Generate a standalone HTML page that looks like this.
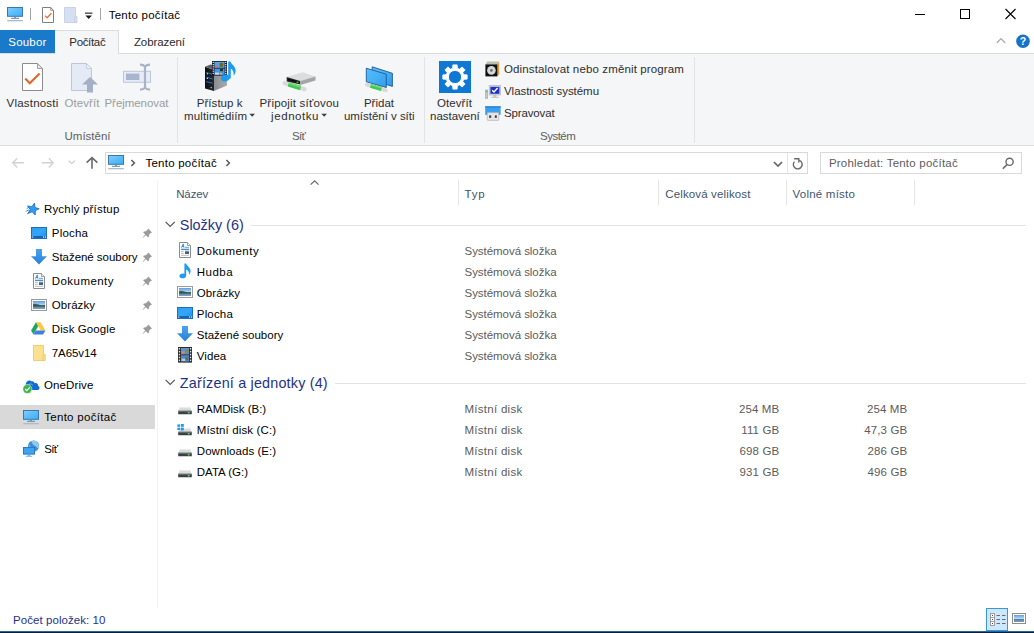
<!DOCTYPE html>
<html lang="cs">
<head>
<meta charset="utf-8">
<title>Tento počítač</title>
<style>
html,body{margin:0;padding:0;}
body{width:1034px;height:633px;position:relative;overflow:hidden;background:#fff;font-family:"Liberation Sans",sans-serif;font-size:12px;}
.t{position:absolute;white-space:pre;line-height:16px;font-size:11.5px;}
.b{position:absolute;}
svg{position:absolute;overflow:visible;}
</style>
</head>
<body>
<!-- ===== frame ===== -->
<div class="b" style="left:0;top:54px;width:1034px;height:91px;background:#f5f6f7;"></div>
<div class="b" style="left:0;top:53px;width:1034px;height:1px;background:#dadbdc;"></div>
<div class="b" style="left:0;top:145px;width:1034px;height:1px;background:#dadbdc;"></div>
<!-- tabs -->
<div class="b" style="left:54px;top:30px;width:65px;height:24px;background:#f5f6f7;border:1px solid #dadbdc;border-bottom:none;box-sizing:border-box;"></div>
<div class="b" style="left:0;top:30px;width:55px;height:23px;background:#1979ca;"></div>
<!-- ribbon separators -->
<div class="b" style="left:177px;top:57px;width:1px;height:86px;background:#e2e3e4;"></div>
<div class="b" style="left:424px;top:57px;width:1px;height:86px;background:#e2e3e4;"></div>
<div class="b" style="left:694px;top:57px;width:1px;height:86px;background:#e2e3e4;"></div>
<!-- address + search boxes -->
<div class="b" style="left:105px;top:152px;width:703px;height:22px;border:1px solid #d9d9d9;box-sizing:border-box;"></div>
<div class="b" style="left:787px;top:153px;width:1px;height:20px;background:#e5e5e5;"></div>
<div class="b" style="left:820px;top:152px;width:202px;height:22px;border:1px solid #d9d9d9;box-sizing:border-box;"></div>
<!-- nav pane -->
<div class="b" style="left:0;top:405px;width:155px;height:24px;background:#d9d9d9;"></div>
<div class="b" style="left:157px;top:180px;width:1px;height:428px;background:#f2f2f2;"></div>
<!-- column dividers -->
<div class="b" style="left:458px;top:180px;width:1px;height:25px;background:#e5e5e5;"></div>
<div class="b" style="left:658px;top:180px;width:1px;height:25px;background:#e5e5e5;"></div>
<div class="b" style="left:786px;top:180px;width:1px;height:25px;background:#e5e5e5;"></div>
<div class="b" style="left:914px;top:180px;width:1px;height:25px;background:#e5e5e5;"></div>
<!-- group lines -->
<div class="b" style="left:251px;top:225px;width:775px;height:1px;background:#e2e2e2;"></div>
<div class="b" style="left:335px;top:383px;width:691px;height:1px;background:#e2e2e2;"></div>
<!-- bottom border -->
<div class="b" style="left:0;top:631px;width:1034px;height:1px;background:#2a6496;"></div><div class="b" style="left:0;top:632px;width:1034px;height:1px;background:#0a2038;"></div>
<!-- view buttons -->
<div class="b" style="left:986px;top:608px;width:22px;height:23px;background:#cce8ff;border:1px solid #3a96dd;box-sizing:border-box;"></div>
<svg width="0" height="0" style="left:0;top:0">
<defs>
<linearGradient id="scr" x1="0" y1="0" x2="1" y2="1"><stop offset="0" stop-color="#86cdfc"/><stop offset="0.5" stop-color="#5bbdfb"/><stop offset="1" stop-color="#3aaefa"/></linearGradient>
<linearGradient id="desk" x1="0" y1="0" x2="1" y2="1"><stop offset="0" stop-color="#2d9ff4"/><stop offset="0.5" stop-color="#35a6f7"/><stop offset="1" stop-color="#1e8eea"/></linearGradient>
<linearGradient id="dl" x1="0" y1="0" x2="0" y2="1"><stop offset="0" stop-color="#4aa3ee"/><stop offset="1" stop-color="#2a7fd6"/></linearGradient>
<linearGradient id="hdd" x1="0" y1="0" x2="0" y2="1"><stop offset="0" stop-color="#c9c9c9"/><stop offset="1" stop-color="#8f9396"/></linearGradient>
<linearGradient id="sky" x1="0" y1="0" x2="0" y2="1"><stop offset="0" stop-color="#5f9be0"/><stop offset="0.5" stop-color="#b9d6ee"/><stop offset="0.6" stop-color="#4f7f96"/><stop offset="1" stop-color="#7fa4c4"/></linearGradient>
<g id="pc">
  <rect x="0.5" y="0.5" width="15" height="8.8" fill="url(#scr)" stroke="#3b77a8" stroke-width="1"/>
  <rect x="7" y="9.8" width="2" height="1.1" fill="#6f93b4"/>
  <rect x="4" y="10.8" width="8" height="1" fill="#6288aa"/>
  <rect x="0.2" y="13" width="15.6" height="1.3" fill="#a9bccf"/>
</g>
<g id="pin"><path d="M6.2 0.6 L10 4.4 L8.9 4.9 L7.2 6.6 L7 8.6 L5.9 9.3 L3.9 7.3 L0.8 10 L0.5 9.7 L3.2 6.6 L1.2 4.6 L1.9 3.5 L3.9 3.3 L5.6 1.6 Z" fill="#999b9e"/></g>
<g id="doc">
  <path d="M0.5 0.5 H8.5 L11.5 3.5 V15.5 H0.5 Z" fill="#fff" stroke="#8b8b8b"/>
  <path d="M8.5 0.5 V3.5 H11.5" fill="#f2f2f2" stroke="#8b8b8b" stroke-width="0.8"/>
  <path d="M2.3 5.7 L4.3 1.9 L4.9 5.7 M3 4.5 H4.8" fill="none" stroke="#2f8ad0" stroke-width="0.9"/>
  <path d="M6 5.3 H10" stroke="#4f9ad0" stroke-width="0.9"/>
  <path d="M2 7.3 H10" stroke="#2a7ab8" stroke-width="1.1"/>
  <path d="M2 9.3 H4.8 M2 11.3 H4.8" stroke="#a4a4a4" stroke-width="0.8"/>
  <rect x="6" y="8.7" width="4" height="1.5" fill="#5f93d6"/><rect x="6" y="10.2" width="4" height="1.6" fill="#2b3a44"/>
  <path d="M2 13.3 H10" stroke="#a8a8a8" stroke-width="0.8"/>
</g>
<g id="deskico">
  <rect x="0.5" y="0.5" width="15" height="11" fill="url(#desk)" stroke="#1b6fc2"/>
  <rect x="1" y="9" width="14" height="2" fill="#1565b8"/>
  <rect x="1.2" y="9.5" width="1.1" height="1.1" fill="#fff"/><rect x="12" y="9.5" width="1.1" height="1.1" fill="#fff"/><rect x="13.9" y="9.5" width="1.1" height="1.1" fill="#fff"/>
</g>
<g id="down"><path d="M5 0 H11 V7.2 H16 L8 15.6 L0 7.2 H5 Z" fill="url(#dl)"/></g>
<g id="pic">
  <rect x="0.5" y="0.5" width="15" height="11" fill="#fff" stroke="#9c9c9c"/>
  <rect x="2" y="2" width="12" height="8" fill="url(#sky)"/>
  <path d="M2 5.4 C4 4 6 5.6 9 6 C11 6.3 12.5 6.2 14 6 V7.6 H2 Z" fill="#2c4f44" opacity="0.9"/>
</g>
<g id="hd">
  <path d="M2 0 H12 L13.8 4 H0.2 Z" fill="#d9dbdc"/>
  <path d="M2.6 0 H11.4 L11.8 1 H2.2 Z" fill="#ececec"/>
  <rect x="0.2" y="3.8" width="13.6" height="3.5" rx="0.4" fill="#3a3f40"/>
  <rect x="0.2" y="3.8" width="13.6" height="0.7" fill="#8e9396"/>
  <rect x="9.8" y="5.2" width="1.8" height="1.1" fill="#7df07a"/>
</g>
</defs></svg>

<!-- title bar quick access -->
<svg style="left:7px;top:7px" width="16" height="16"><use href="#pc"/></svg>
<div class="b" style="left:30px;top:8px;width:1px;height:12px;background:#a6a6a6;"></div>
<svg style="left:42px;top:7px" width="13" height="16">
  <path d="M0.5 0.5 H8.7 L11.5 3.3 V15.5 H0.5 Z" fill="#fff" stroke="#7f7f7f"/>
  <path d="M8.7 0.5 V3.3 H11.5" fill="none" stroke="#7f7f7f" stroke-width="0.8"/>
  <path d="M2.9 8.6 L5.1 10.8 L9.4 6.2" fill="none" stroke="#e96f3a" stroke-width="1.3"/>
</svg>
<svg style="left:64px;top:7px" width="14" height="16">
  <path d="M0.5 0.5 H11.5 V9.5 H13 V15.5 H0.5 Z" fill="#d6e0f1" stroke="#c8d3e8"/>
  <path d="M10.6 9.5 V15.5" stroke="#c0cce2" stroke-width="0.8" fill="none"/>
</svg>
<svg style="left:85px;top:12px" width="8" height="8">
  <rect x="0" y="0.6" width="7.4" height="1.1" fill="#1a1a1a"/>
  <path d="M0.4 3.6 H7 L3.7 7 Z" fill="#1a1a1a"/>
</svg>
<div class="b" style="left:100px;top:8px;width:1px;height:12px;background:#a6a6a6;"></div>

<!-- window controls -->
<svg style="left:914px;top:9px" width="110" height="12">
  <rect x="1" y="5" width="10" height="1" fill="#000"/>
  <rect x="46.5" y="0.5" width="9" height="9" fill="none" stroke="#000" stroke-width="1"/>
  <path d="M91.5 0 L101.5 10 M101.5 0 L91.5 10" stroke="#000" stroke-width="1.1" fill="none"/>
</svg>
<!-- collapse chevron + help -->
<svg style="left:996px;top:34px" width="36" height="15">
  <path d="M0.8 9 L5 4.6 L9.2 9" fill="none" stroke="#a8a8a8" stroke-width="1.2"/>
  <circle cx="27" cy="7.2" r="6.8" fill="#1673c7"/>
  <text x="27" y="11" text-anchor="middle" font-family="Liberation Sans, sans-serif" font-weight="bold" font-size="10.5" fill="#fff">?</text>
</svg>

<!-- ===== ribbon icons ===== -->
<!-- Vlastnosti -->
<svg style="left:22px;top:63px" width="22" height="28">
  <path d="M0.5 0.5 H15.5 L20.5 5.5 V27.5 H0.5 Z" fill="#fff" stroke="#8c8c8c"/>
  <path d="M15.5 0.5 V5.5 H20.5 Z" fill="#e8e8e8" stroke="#8c8c8c" stroke-width="0.8"/>
  <path d="M3.2 15.6 L7.8 20.2 L17.6 10.4" fill="none" stroke="#e0672e" stroke-width="2.1"/>
</svg>
<!-- Otevrit (disabled) -->
<svg style="left:71px;top:63px" width="28" height="30">
  <path d="M0.5 0.5 H15.5 L20.5 5.5 V27.5 H0.5 Z" fill="#e4ebf7" stroke="#bcc7da"/>
  <path d="M15.5 0.5 V5.5 H20.5 Z" fill="#eef2fa" stroke="#bcc7da" stroke-width="0.8"/>
  <path d="M19 14 L27 21.6 H22 V29.4 H16 V21.6 H11 Z" fill="#a3b0c7"/>
</svg>
<!-- Prejmenovat (disabled) -->
<svg style="left:123px;top:64px" width="29" height="27">
  <rect x="0.5" y="7.3" width="27" height="11" fill="#e6ecf7" stroke="#bcc7da"/>
  <rect x="3" y="9.6" width="13.4" height="6.4" fill="#a9b5cc"/>
  <path d="M17 0.6 C19.5 0.6 21 1.2 22 2.6 C23 1.2 24.5 0.6 27 0.6 M17 25.6 C19.5 25.6 21 25 22 23.6 C23 25 24.5 25.6 27 25.6 M22 2.4 V23.8" fill="none" stroke="#a9b3c6" stroke-width="2.2"/>
</svg>
<!-- Pristup k multimediim -->
<svg style="left:204px;top:60px" width="33" height="32">
  <defs><linearGradient id="twf" x1="0" y1="0" x2="1" y2="0"><stop offset="0" stop-color="#0d0f12"/><stop offset="1" stop-color="#23272d"/></linearGradient>
  <linearGradient id="tws" x1="0" y1="0" x2="1" y2="0"><stop offset="0" stop-color="#8b8d90"/><stop offset="1" stop-color="#a9abad"/></linearGradient></defs>
  <path d="M1 6.8 L10 10 V31 L1 28.4 Z" fill="url(#twf)"/>
  <path d="M1 6.8 L6.5 4.5 L23 8 L10 10 Z" fill="#5d6166"/>
  <path d="M10 10 L23 8 V25.6 L10 31 Z" fill="url(#tws)"/>
  <path d="M2.2 12.4 L8.6 14.4 M2.2 17 L8.6 19 M2.2 21.6 L8.6 23.2" stroke="#2f7fd0" stroke-width="0.9"/>
  <rect x="2.8" y="13.2" width="1.2" height="1.2" fill="#bfe6ff"/><rect x="2.8" y="17.8" width="1.2" height="1.2" fill="#bfe6ff"/>
  <rect x="6.6" y="27" width="1.2" height="1.2" fill="#7ff0e0"/>
  <rect x="8" y="1" width="15" height="14.6" fill="#16191d"/>
  <rect x="10.4" y="1.8" width="10.2" height="6" fill="#5aa0e6"/><rect x="10.4" y="8.6" width="10.2" height="6.2" fill="#4a94e2"/>
  <rect x="11" y="5.6" width="3" height="2" fill="#d86a6a"/><rect x="15.6" y="3" width="3.6" height="3.8" fill="#6b6a1c"/><rect x="16" y="9" width="3" height="2.2" fill="#24303a"/><rect x="11" y="12.6" width="4" height="2" fill="#c7ddf3"/><rect x="16" y="13" width="2" height="1.6" fill="#d8c23a"/>
  <g fill="#fff"><rect x="8.7" y="1.8" width="1.1" height="1.2"/><rect x="8.7" y="4" width="1.1" height="1.2"/><rect x="8.7" y="6.2" width="1.1" height="1.2"/><rect x="8.7" y="8.4" width="1.1" height="1.2"/><rect x="8.7" y="10.6" width="1.1" height="1.2"/><rect x="8.7" y="12.8" width="1.1" height="1.2"/>
  <rect x="21.2" y="1.8" width="1.1" height="1.2"/><rect x="21.2" y="4" width="1.1" height="1.2"/><rect x="21.2" y="6.2" width="1.1" height="1.2"/><rect x="21.2" y="8.4" width="1.1" height="1.2"/><rect x="21.2" y="10.6" width="1.1" height="1.2"/><rect x="21.2" y="12.8" width="1.1" height="1.2"/></g>
  <ellipse cx="21.2" cy="18" rx="4.4" ry="3.3" transform="rotate(-18 21.2 18)" fill="#1d9bf0"/>
  <path d="M24.2 18.6 V1.4 H26.4 C27.2 4.4 31.6 6 31.6 10.4 C31.6 12.8 30.8 14.4 29.6 15.6 C30 12.6 29 9.8 26.8 8.6 V18.6 Z" fill="#1d9bf0"/>
</svg>
<!-- Pripojit sitovou jednotku -->
<svg style="left:283px;top:71px" width="34" height="22">
  <path d="M3.7 6 L19.8 1.3 L32.5 5.4 L17.3 9.9 Z" fill="#dcdddd"/>
  <path d="M3.7 6 L17.3 9.9 V13.6 L3.7 10.4 Z" fill="#2a2d2f"/>
  <path d="M4.6 7.2 L16.4 10.6 V12.4 L4.6 9.4 Z" fill="#111"/>
  <path d="M17.3 9.9 L32.5 5.4 V9.4 L17.3 14 Z" fill="#a4a7a9"/>
  <rect x="13.6" y="10.6" width="1.8" height="1.2" fill="#4fd84a"/>
  <path d="M1.6 12.2 L21.6 18.2" stroke="#d7d9da" stroke-width="4.2" stroke-linecap="round"/>
  <path d="M5.4 13.4 L17.6 17" stroke="#45c653" stroke-width="4.6"/>
  <path d="M5.4 12.2 L17.6 15.8" stroke="#7be083" stroke-width="1.2"/>
</svg>
<!-- Pridat umisteni v siti -->
<svg style="left:364px;top:66px" width="30" height="27">
  <defs><linearGradient id="mon" x1="0" y1="0" x2="1" y2="1"><stop offset="0" stop-color="#58bdf8"/><stop offset="0.5" stop-color="#45b0f5"/><stop offset="1" stop-color="#2f9aec"/></linearGradient></defs>
  <path d="M8.2 0.8 L28.4 7.3 V20.4 L8.2 14 Z" fill="url(#mon)" stroke="#1c5a9a" stroke-width="0.9"/>
  <path d="M2.3 2.2 L22.3 8.2 V21.5 L2.3 15.8 Z" fill="url(#mon)" stroke="#1c5a9a" stroke-width="0.9"/>
  <path d="M2.8 18.6 L21.8 24.2" stroke="#d7d9da" stroke-width="3.8" stroke-linecap="round"/>
  <path d="M6.6 19.8 L17.4 23" stroke="#45c653" stroke-width="4.2"/>
  <path d="M6.6 18.6 L17.4 21.8" stroke="#7be083" stroke-width="1.1"/>
</svg>
<!-- Otevrit nastaveni -->
<svg style="left:439px;top:61px" width="32" height="32">
  <rect width="32" height="32" fill="#0f78d4"/>
  <path fill-rule="evenodd" fill="#fff" stroke="#fff" stroke-width="0.9" stroke-linejoin="round" d="M13.69 7.30 L13.92 3.88 L18.08 3.88 L18.31 7.30 L20.51 8.21 L23.10 5.96 L26.04 8.90 L23.79 11.49 L24.70 13.69 L28.12 13.92 L28.12 18.08 L24.70 18.31 L23.79 20.51 L26.04 23.10 L23.10 26.04 L20.51 23.79 L18.31 24.70 L18.08 28.12 L13.92 28.12 L13.69 24.70 L11.49 23.79 L8.90 26.04 L5.96 23.10 L8.21 20.51 L7.30 18.31 L3.88 18.08 L3.88 13.92 L7.30 13.69 L8.21 11.49 L5.96 8.90 L8.90 5.96 L11.49 8.21 Z M22.60 16 A6.6 6.6 0 1 0 9.40 16 A6.6 6.6 0 1 0 22.60 16 Z"/>
</svg>
<!-- small icons -->
<svg style="left:485px;top:61px" width="16" height="16">
  <path d="M0.4 3.4 L2.4 0.6 H14.2 L12.4 3.4 Z" fill="#b9bfae"/>
  <path d="M12.4 3.4 L14.2 0.6 V13 L12.4 15.4 Z" fill="#e39a3c"/>
  <rect x="0.4" y="3.4" width="12" height="12" fill="#101010"/>
  <circle cx="6.4" cy="9.4" r="4.3" fill="#d4d6d8"/><circle cx="6.4" cy="9.4" r="1.3" fill="#6b6b6b"/>
</svg>
<svg style="left:485px;top:85px" width="16" height="14">
  <rect x="0.4" y="5" width="2.4" height="8.4" fill="#c9c9c9" stroke="#9a9a9a" stroke-width="0.5"/><rect x="1" y="5.8" width="1.2" height="1.4" fill="#44c044"/>
  <rect x="4.2" y="0.6" width="11.4" height="9.4" fill="#d9dde2" stroke="#a5abb3" stroke-width="0.6"/>
  <rect x="5.4" y="1.8" width="9" height="7" fill="#2030c4"/>
  <path d="M7.2 5.2 L9 7 L12.6 3" stroke="#fff" stroke-width="1.4" fill="none"/>
  <rect x="8.4" y="10.2" width="3" height="1.6" fill="#b5b9be"/><rect x="6.2" y="11.8" width="7.4" height="1.2" fill="#c7cacd"/>
</svg>
<svg style="left:485px;top:106px" width="16" height="15">
  <rect x="0.2" y="0.3" width="15.4" height="8.6" fill="#3a9fee"/><rect x="0.2" y="0.3" width="15.4" height="1.4" fill="#2b83d6"/>
  <rect x="2.2" y="6.6" width="11.6" height="7.8" rx="0.8" fill="#e6e6e6" stroke="#a8a8a8" stroke-width="0.6"/>
  <rect x="4.2" y="9.4" width="2" height="2.4" fill="#3a3a3a"/><rect x="9.8" y="9.4" width="2" height="2.4" fill="#3a3a3a"/>
</svg>
<!-- dropdown arrows -->
<svg style="left:249px;top:113px" width="80" height="6">
  <path d="M0.4 0.8 H6 L3.2 3.8 Z" fill="#3c3c3c"/>
  <path d="M72.4 0.8 H78 L75.2 3.8 Z" fill="#3c3c3c"/>
</svg>

<!-- ===== address bar ===== -->
<svg style="left:12px;top:157px" width="90" height="13">
  <path d="M5.2 1.2 L0.8 5.8 L5.2 10.4 M0.8 5.8 H12" fill="none" stroke="#d2d2d2" stroke-width="1.4"/>
  <path d="M36.8 1.2 L41.2 5.8 L36.8 10.4 M41.2 5.8 H30" fill="none" stroke="#d2d2d2" stroke-width="1.4"/>
  <path d="M56.8 3.8 L59.8 6.6 L62.8 3.8" fill="none" stroke="#cfcfcf" stroke-width="1.2"/>
  <path d="M74.6 5.6 L80 0.6 L85.4 5.6 M80 0.8 V11.8" fill="none" stroke="#6a6a6a" stroke-width="1.6"/>
</svg>
<svg style="left:108px;top:155px" width="16" height="16"><use href="#pc"/></svg>
<svg style="left:130px;top:158px" width="110" height="10">
  <path d="M1.4 2 L4.4 5 L1.4 8" fill="none" stroke="#5a5a5a" stroke-width="1.5"/>
  <path d="M96.4 2 L99.4 5 L96.4 8" fill="none" stroke="#5a5a5a" stroke-width="1.5"/>
</svg>
<svg style="left:773px;top:156px" width="34" height="14">
  <path d="M0.9 6 L5 10.1 L9.1 6" fill="none" stroke="#666" stroke-width="1.7"/>
  <path d="M26.2 4.3 A4.4 4.4 0 1 1 21.4 5.6" fill="none" stroke="#6a6a6a" stroke-width="1.4"/>
  <path d="M21.2 2.8 H25.8 V6.6" fill="none" stroke="#6a6a6a" stroke-width="1.4"/>
</svg>
<svg style="left:1001.5px;top:157.4px" width="13" height="13">
  <circle cx="7.6" cy="4.8" r="3.6" fill="none" stroke="#6a6a6a" stroke-width="1.4"/>
  <path d="M5 7.6 L0.8 11.8" stroke="#6a6a6a" stroke-width="1.6" fill="none"/>
</svg>
<!-- sort chevron -->
<svg style="left:310px;top:180px" width="10" height="6"><path d="M0.6 4.6 L4.6 0.8 L8.6 4.6" fill="none" stroke="#666" stroke-width="1.2"/></svg>
<!-- group chevrons -->
<svg style="left:165px;top:221px" width="11" height="7"><path d="M0.6 0.8 L5.2 5.4 L9.8 0.8" fill="none" stroke="#555" stroke-width="1.2"/></svg>
<svg style="left:165px;top:379px" width="11" height="7"><path d="M0.6 0.8 L5.2 5.4 L9.8 0.8" fill="none" stroke="#555" stroke-width="1.2"/></svg>

<!-- ===== nav pane icons ===== -->
<svg style="left:25px;top:203px" width="15" height="12">
  <path d="M1.6 5.6 L4.6 4 M0.6 8.4 L4 6.8 M2 11 L4.8 9.4" stroke="#3f9ff0" stroke-width="1"/>
  <path d="M10.1 -0.1 L10.7 4.3 L14.9 5.6 L10.9 7.4 L11.0 11.8 L7.9 8.6 L3.8 10.0 L5.9 6.2 L3.3 2.7 L7.6 3.5 Z" transform="translate(-0.7,0.2)" fill="#2e9df0" stroke="#2273c2" stroke-width="0.9" stroke-linejoin="miter"/>
</svg>
<svg style="left:31px;top:227px" width="16" height="12"><use href="#deskico"/></svg>
<svg style="left:31px;top:249px" width="16" height="16"><use href="#down"/></svg>
<svg style="left:33px;top:273px" width="12" height="16"><use href="#doc"/></svg>
<svg style="left:31px;top:299px" width="16" height="12"><use href="#pic"/></svg>
<svg style="left:31px;top:322px" width="15" height="13">
  <path d="M4.9 0.2 H9.5 L14.4 8.6 H9.8 Z" fill="#fbc93a"/>
  <path d="M4.9 0.2 L7.2 4.2 L2.4 12.4 L0.1 8.4 Z" fill="#1fa463"/>
  <path d="M4.8 8.6 H14.4 L12.1 12.4 H2.4 Z" fill="#3f7fe0"/>
</svg>
<svg style="left:33px;top:345px" width="13" height="16">
  <path d="M0.5 0.5 H10.5 V9.5 H12.2 V15.5 H0.5 Z" fill="#fbe18f" stroke="#efcf6c"/>
  <path d="M10 9.5 V15.5" stroke="#e9c558" stroke-width="0.8" fill="none"/>
</svg>
<svg style="left:23px;top:379px" width="17" height="15">
  <path d="M3.6 11 C0.4 11 0.2 7.2 2.8 6.4 C2.2 2.8 6 0 8.8 2.4 C10 2 11 2.8 11.4 4.2 C13.8 3.4 15.6 5.4 15 7 C17.2 7.4 17 11 14.6 11 Z" fill="#0f6cd4"/>
  <path d="M5 6.6 C6 4.6 8.6 4.4 9.8 6.2" stroke="#8cc4f6" stroke-width="0.8" fill="none"/>
  <circle cx="4.4" cy="10" r="4.5" fill="#3cb54a" stroke="#fff" stroke-width="0.5"/>
  <path d="M2.2 10 L3.8 11.6 L6.8 8.4" fill="none" stroke="#fff" stroke-width="1.3"/>
</svg>
<svg style="left:23px;top:410px" width="16" height="16"><use href="#pc"/></svg>
<svg style="left:23px;top:440px" width="17" height="18">
  <circle cx="10.6" cy="6" r="5.6" fill="#3d8fd6"/>
  <path d="M8 1.6 C10 3 9 5 11.4 5.4 C13.6 5.8 13.4 8 15.6 8.4 C16.6 5.6 15.2 1.8 11.4 0.6 Z" fill="#9fd0f0" opacity="0.9"/>
  <path d="M5.6 4.4 C7 5.4 7.4 7.4 6 8.4" fill="none" stroke="#8cc6ee" stroke-width="1"/>
  <rect x="0.5" y="7.5" width="11" height="6.6" fill="#3fa4ee" stroke="#2b78c4"/>
  <rect x="4.8" y="14.6" width="2.4" height="1.2" fill="#5aa6dd"/><rect x="2.8" y="15.8" width="6.4" height="1" fill="#7fb6e2"/>
</svg>
<!-- pins -->
<svg style="left:141.500px;top:228px" width="11" height="11"><use href="#pin"/></svg>
<svg style="left:141.500px;top:252px" width="11" height="11"><use href="#pin"/></svg>
<svg style="left:141.500px;top:276px" width="11" height="11"><use href="#pin"/></svg>
<svg style="left:141.500px;top:300px" width="11" height="11"><use href="#pin"/></svg>
<svg style="left:141.500px;top:324px" width="11" height="11"><use href="#pin"/></svg>

<!-- ===== list icons ===== -->
<svg style="left:179px;top:242px" width="12" height="16"><use href="#doc"/></svg>
<svg style="left:179px;top:263px" width="13" height="16">
  <path d="M5.4 0.4 H7.2 C7.6 3 11.6 4.2 11.6 8 C11.6 9.8 10.8 11 10 11.8 C10.4 9.4 9.2 7.2 7.2 6.6 V12.4 C7.2 16 0.4 16.4 0.4 13 C0.4 10.6 3.6 9.8 5.4 10.8 Z" fill="#1f9bf0"/>
</svg>
<svg style="left:177px;top:286px" width="16" height="12"><use href="#pic"/></svg>
<svg style="left:177px;top:307px" width="16" height="12"><use href="#deskico"/></svg>
<svg style="left:177px;top:326px" width="16" height="16"><use href="#down"/></svg>
<svg style="left:178px;top:347px" width="14" height="16">
  <rect x="0" y="0" width="14" height="15.6" fill="#2a2a2a"/>
  <rect x="3" y="1" width="8" height="6.4" fill="#5a93d8"/><rect x="3" y="8.2" width="8" height="6.4" fill="#4a86d0"/>
  <rect x="3.6" y="4.4" width="3" height="2.4" fill="#c88a6a"/><rect x="7.4" y="2.4" width="3" height="3.4" fill="#8a8a2a"/><rect x="3.6" y="11.6" width="3.6" height="2.4" fill="#b9c8da"/><rect x="7.6" y="10" width="2.6" height="3" fill="#7a6a2a"/>
  <g fill="#e8e8e8"><rect x="0.8" y="1" width="1.3" height="1.5"/><rect x="0.8" y="3.9" width="1.3" height="1.5"/><rect x="0.8" y="6.8" width="1.3" height="1.5"/><rect x="0.8" y="9.7" width="1.3" height="1.5"/><rect x="0.8" y="12.6" width="1.3" height="1.5"/>
  <rect x="11.9" y="1" width="1.3" height="1.5"/><rect x="11.9" y="3.9" width="1.3" height="1.5"/><rect x="11.9" y="6.8" width="1.3" height="1.5"/><rect x="11.9" y="9.7" width="1.3" height="1.5"/><rect x="11.9" y="12.6" width="1.3" height="1.5"/></g>
</svg>
<svg style="left:178px;top:407px" width="15" height="8"><use href="#hd"/></svg>
<svg style="left:178px;top:428px" width="15" height="8"><use href="#hd"/></svg>
<svg style="left:177px;top:423.5px" width="8" height="8"><g fill="#1e9be8"><rect x="0.4" y="0.4" width="2.6" height="2.4"/><rect x="3.8" y="0" width="3" height="2.8"/><rect x="0.4" y="3.6" width="2.6" height="2.4"/><rect x="3.8" y="3.6" width="3" height="2.8"/></g></svg>
<svg style="left:178px;top:449px" width="15" height="8"><use href="#hd"/></svg>
<svg style="left:178px;top:470px" width="15" height="8"><use href="#hd"/></svg>

<!-- ===== status bar view icons ===== -->
<svg style="left:990px;top:613px" width="16" height="14">
  <rect x="0.5" y="0.5" width="4" height="12" fill="#fff" stroke="#8a8a8a" stroke-width="0.8"/>
  <path d="M0.5 4.5 H4.5 M0.5 8.5 H4.5" stroke="#8a8a8a" stroke-width="0.8"/>
  <rect x="2" y="2" width="1" height="1" fill="#444"/><rect x="2" y="6" width="1" height="1" fill="#444"/><rect x="2" y="10" width="1" height="1" fill="#833"/>
  <path d="M6.5 2.5 H10 M12 2.5 H15.5 M6.5 6.5 H10 M12 6.5 H15.5 M6.5 10.5 H10 M12 10.5 H15.5" stroke="#6a6a6a" stroke-width="1"/>
</svg>
<svg style="left:1012px;top:613px" width="15" height="11">
  <rect x="0.5" y="0.5" width="13" height="10" fill="#fff" stroke="#8f8f8f"/>
  <rect x="2" y="2" width="10" height="7" fill="url(#sky)"/>
</svg>

<span class="t" style="left:108.70px;top:7.00px;letter-spacing:0.246px;color:#000;">Tento počítač</span>
<span class="t" style="left:8.30px;top:34.00px;letter-spacing:0.184px;color:#fff;">Soubor</span>
<span class="t" style="left:69.30px;top:34.00px;letter-spacing:-0.337px;color:#2b2b2b;">Počítač</span>
<span class="t" style="left:133.90px;top:34.00px;letter-spacing:-0.087px;color:#2b2b2b;">Zobrazení</span>
<span class="t" style="left:6.50px;top:95.00px;letter-spacing:0.214px;color:#2e2e2e;">Vlastnosti</span>
<span class="t" style="left:64.50px;top:95.00px;letter-spacing:0.069px;color:#9b9da0;">Otevřít</span>
<span class="t" style="left:104.50px;top:95.00px;letter-spacing:-0.051px;color:#9b9da0;">Přejmenovat</span>
<span class="t" style="left:64.50px;top:128.00px;letter-spacing:-0.002px;color:#5e5e5e;">Umístění</span>
<span class="t" style="left:196.80px;top:95.00px;letter-spacing:0.034px;color:#2e2e2e;">Přístup k</span>
<span class="t" style="left:184.10px;top:108.00px;letter-spacing:0.101px;color:#2e2e2e;">multimédiím</span>
<span class="t" style="left:259.50px;top:95.00px;letter-spacing:0.191px;color:#2e2e2e;">Připojit síťovou</span>
<span class="t" style="left:271.10px;top:108.00px;letter-spacing:0.564px;color:#2e2e2e;">jednotku</span>
<span class="t" style="left:292.00px;top:128.00px;letter-spacing:-0.663px;color:#5e5e5e;">Síť</span>
<span class="t" style="left:363.90px;top:95.00px;letter-spacing:0.026px;color:#2e2e2e;">Přidat</span>
<span class="t" style="left:343.90px;top:108.00px;letter-spacing:-0.022px;color:#2e2e2e;">umístění v síti</span>
<span class="t" style="left:437.00px;top:95.00px;letter-spacing:0.055px;color:#2e2e2e;">Otevřít</span>
<span class="t" style="left:430.00px;top:108.00px;letter-spacing:-0.008px;color:#2e2e2e;">nastavení</span>
<span class="t" style="left:504.00px;top:61.00px;letter-spacing:0.134px;color:#2e2e2e;">Odinstalovat nebo změnit program</span>
<span class="t" style="left:504.00px;top:83.00px;letter-spacing:-0.049px;color:#2e2e2e;">Vlastnosti systému</span>
<span class="t" style="left:504.00px;top:105.00px;letter-spacing:-0.142px;color:#2e2e2e;">Spravovat</span>
<span class="t" style="left:540.10px;top:128.00px;letter-spacing:-0.541px;color:#5e5e5e;">Systém</span>
<span class="t" style="left:145.50px;top:155.00px;letter-spacing:0.230px;color:#000;">Tento počítač</span>
<span class="t" style="left:828.90px;top:155.00px;letter-spacing:0.215px;color:#5c5c5c;">Prohledat: Tento počítač</span>
<span class="t" style="left:176.20px;top:186.00px;letter-spacing:-0.122px;color:#43556d;">Název</span>
<span class="t" style="left:464.50px;top:186.00px;letter-spacing:0.818px;color:#43556d;">Typ</span>
<span class="t" style="left:665.30px;top:186.00px;letter-spacing:0.132px;color:#43556d;">Celková velikost</span>
<span class="t" style="left:792.50px;top:186.00px;letter-spacing:0.228px;color:#43556d;">Volné místo</span>
<span class="t" style="left:179.80px;top:215.00px;letter-spacing:-0.008px;color:#1e3287;font-size:14.4px;line-height:20px;">Složky (6)</span>
<span class="t" style="left:179.80px;top:373.00px;letter-spacing:0.175px;color:#1e3287;font-size:14.4px;line-height:20px;">Zařízení a jednotky (4)</span>
<span class="t" style="left:196.80px;top:243.00px;letter-spacing:0.459px;color:#000;">Dokumenty</span>
<span class="t" style="left:464.50px;top:243.00px;letter-spacing:-0.043px;color:#5c5c5c;">Systémová složka</span>
<span class="t" style="left:196.80px;top:264.00px;letter-spacing:0.462px;color:#000;">Hudba</span>
<span class="t" style="left:464.50px;top:264.00px;letter-spacing:-0.043px;color:#5c5c5c;">Systémová složka</span>
<span class="t" style="left:196.80px;top:285.00px;letter-spacing:0.082px;color:#000;">Obrázky</span>
<span class="t" style="left:464.50px;top:285.00px;letter-spacing:-0.043px;color:#5c5c5c;">Systémová složka</span>
<span class="t" style="left:196.80px;top:306.00px;letter-spacing:0.171px;color:#000;">Plocha</span>
<span class="t" style="left:464.50px;top:306.00px;letter-spacing:-0.043px;color:#5c5c5c;">Systémová složka</span>
<span class="t" style="left:196.80px;top:327.00px;letter-spacing:0.013px;color:#000;">Stažené soubory</span>
<span class="t" style="left:464.50px;top:327.00px;letter-spacing:-0.043px;color:#5c5c5c;">Systémová složka</span>
<span class="t" style="left:196.80px;top:348.00px;letter-spacing:0.056px;color:#000;">Videa</span>
<span class="t" style="left:464.50px;top:348.00px;letter-spacing:-0.043px;color:#5c5c5c;">Systémová složka</span>
<span class="t" style="left:196.80px;top:401.00px;letter-spacing:-0.028px;color:#000;">RAMDisk (B:)</span>
<span class="t" style="left:464.50px;top:401.00px;letter-spacing:0.276px;color:#5c5c5c;">Místní disk</span>
<span class="t" style="left:738.94px;top:401.00px;letter-spacing:0.120px;color:#5c5c5c;">254 MB</span>
<span class="t" style="left:866.94px;top:401.00px;letter-spacing:0.120px;color:#5c5c5c;">254 MB</span>
<span class="t" style="left:196.80px;top:422.00px;letter-spacing:0.130px;color:#000;">Místní disk (C:)</span>
<span class="t" style="left:464.50px;top:422.00px;letter-spacing:0.276px;color:#5c5c5c;">Místní disk</span>
<span class="t" style="left:741.28px;top:422.00px;letter-spacing:0.120px;color:#5c5c5c;">111 GB</span>
<span class="t" style="left:864.26px;top:422.00px;letter-spacing:0.120px;color:#5c5c5c;">47,3 GB</span>
<span class="t" style="left:196.80px;top:443.00px;letter-spacing:0.055px;color:#000;">Downloads (E:)</span>
<span class="t" style="left:464.50px;top:443.00px;letter-spacing:0.276px;color:#5c5c5c;">Místní disk</span>
<span class="t" style="left:739.58px;top:443.00px;letter-spacing:0.120px;color:#5c5c5c;">698 GB</span>
<span class="t" style="left:867.58px;top:443.00px;letter-spacing:0.120px;color:#5c5c5c;">286 GB</span>
<span class="t" style="left:196.80px;top:464.00px;letter-spacing:-0.014px;color:#000;">DATA (G:)</span>
<span class="t" style="left:464.50px;top:464.00px;letter-spacing:0.276px;color:#5c5c5c;">Místní disk</span>
<span class="t" style="left:739.58px;top:464.00px;letter-spacing:0.120px;color:#5c5c5c;">931 GB</span>
<span class="t" style="left:867.58px;top:464.00px;letter-spacing:0.120px;color:#5c5c5c;">496 GB</span>
<span class="t" style="left:43.90px;top:201.00px;letter-spacing:0.196px;color:#000;">Rychlý přístup</span>
<span class="t" style="left:51.80px;top:225.00px;letter-spacing:0.205px;color:#000;">Plocha</span>
<span class="t" style="left:51.80px;top:249.00px;letter-spacing:-0.041px;color:#000;">Stažené soubory</span>
<span class="t" style="left:51.80px;top:273.00px;letter-spacing:0.436px;color:#000;">Dokumenty</span>
<span class="t" style="left:51.80px;top:297.00px;letter-spacing:0.053px;color:#000;">Obrázky</span>
<span class="t" style="left:51.80px;top:321.00px;letter-spacing:0.096px;color:#000;">Disk Google</span>
<span class="t" style="left:51.80px;top:345.00px;letter-spacing:-0.101px;color:#000;">7A65v14</span>
<span class="t" style="left:43.90px;top:377.00px;letter-spacing:0.128px;color:#000;">OneDrive</span>
<span class="t" style="left:44.20px;top:409.00px;letter-spacing:0.300px;color:#000;">Tento počítač</span>
<span class="t" style="left:44.20px;top:441.00px;letter-spacing:-0.629px;color:#000;">Síť</span>
<span class="t" style="left:13.00px;top:612.00px;letter-spacing:0.063px;color:#1e3287;">Počet položek: 10</span>
</body>
</html>
